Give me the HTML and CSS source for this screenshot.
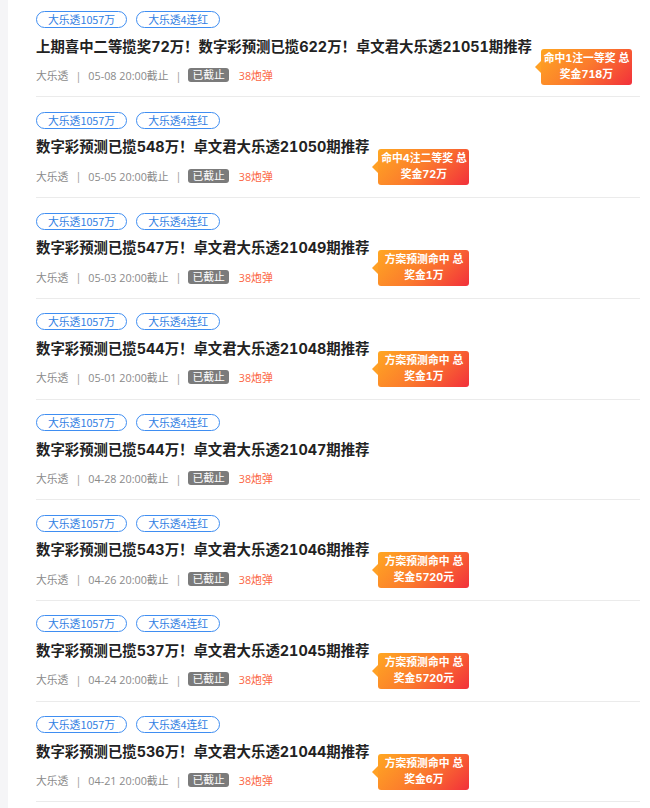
FILE: index.html
```html
<!DOCTYPE html>
<html lang="zh-CN">
<head>
    <meta charset="UTF-8">
    <title>大乐透推荐</title>
    <link rel="stylesheet" href="styles.css">
</head>
<body>
<div class="panel">
    <div class="item">
        <div class="tags"><span class="tag">大乐透1057万</span><span class="tag">大乐透4连红</span></div>
        <div class="title"><span class="title-text">上期喜中二等揽奖72万！数字彩预测已揽622万！卓文君大乐透21051期推荐<span class="prize">命中1注一等奖 总<br>奖金718万</span></span></div>
        <div class="meta"><span>大乐透</span><span class="sep">|</span><span>05-08 20:00截止</span><span class="sep">|</span><span class="closed">已截止</span><span class="bomb">38炮弹</span></div>
    </div>
    <div class="item">
        <div class="tags"><span class="tag">大乐透1057万</span><span class="tag">大乐透4连红</span></div>
        <div class="title"><span class="title-text">数字彩预测已揽548万！卓文君大乐透21050期推荐<span class="prize">命中4注二等奖 总<br>奖金72万</span></span></div>
        <div class="meta"><span>大乐透</span><span class="sep">|</span><span>05-05 20:00截止</span><span class="sep">|</span><span class="closed">已截止</span><span class="bomb">38炮弹</span></div>
    </div>
    <div class="item">
        <div class="tags"><span class="tag">大乐透1057万</span><span class="tag">大乐透4连红</span></div>
        <div class="title"><span class="title-text">数字彩预测已揽547万！卓文君大乐透21049期推荐<span class="prize">方案预测命中 总<br>奖金1万</span></span></div>
        <div class="meta"><span>大乐透</span><span class="sep">|</span><span>05-03 20:00截止</span><span class="sep">|</span><span class="closed">已截止</span><span class="bomb">38炮弹</span></div>
    </div>
    <div class="item">
        <div class="tags"><span class="tag">大乐透1057万</span><span class="tag">大乐透4连红</span></div>
        <div class="title"><span class="title-text">数字彩预测已揽544万！卓文君大乐透21048期推荐<span class="prize">方案预测命中 总<br>奖金1万</span></span></div>
        <div class="meta"><span>大乐透</span><span class="sep">|</span><span>05-01 20:00截止</span><span class="sep">|</span><span class="closed">已截止</span><span class="bomb">38炮弹</span></div>
    </div>
    <div class="item">
        <div class="tags"><span class="tag">大乐透1057万</span><span class="tag">大乐透4连红</span></div>
        <div class="title"><span class="title-text">数字彩预测已揽544万！卓文君大乐透21047期推荐</span></div>
        <div class="meta"><span>大乐透</span><span class="sep">|</span><span>04-28 20:00截止</span><span class="sep">|</span><span class="closed">已截止</span><span class="bomb">38炮弹</span></div>
    </div>
    <div class="item">
        <div class="tags"><span class="tag">大乐透1057万</span><span class="tag">大乐透4连红</span></div>
        <div class="title"><span class="title-text">数字彩预测已揽543万！卓文君大乐透21046期推荐<span class="prize">方案预测命中 总<br>奖金5720元</span></span></div>
        <div class="meta"><span>大乐透</span><span class="sep">|</span><span>04-26 20:00截止</span><span class="sep">|</span><span class="closed">已截止</span><span class="bomb">38炮弹</span></div>
    </div>
    <div class="item">
        <div class="tags"><span class="tag">大乐透1057万</span><span class="tag">大乐透4连红</span></div>
        <div class="title"><span class="title-text">数字彩预测已揽537万！卓文君大乐透21045期推荐<span class="prize">方案预测命中 总<br>奖金5720元</span></span></div>
        <div class="meta"><span>大乐透</span><span class="sep">|</span><span>04-24 20:00截止</span><span class="sep">|</span><span class="closed">已截止</span><span class="bomb">38炮弹</span></div>
    </div>
    <div class="item">
        <div class="tags"><span class="tag">大乐透1057万</span><span class="tag">大乐透4连红</span></div>
        <div class="title"><span class="title-text">数字彩预测已揽536万！卓文君大乐透21044期推荐<span class="prize">方案预测命中 总<br>奖金6万</span></span></div>
        <div class="meta"><span>大乐透</span><span class="sep">|</span><span>04-21 20:00截止</span><span class="sep">|</span><span class="closed">已截止</span><span class="bomb">38炮弹</span></div>
    </div>
</div>
</body>
</html>
```

FILE: styles.css
```css
body {
    margin: 0;
    background: #f5f5f7;
    font-family: Inter, "Noto Sans CJK SC", sans-serif;
    font-variant-numeric: tabular-nums;
}

.panel {
    margin-left: 8px;
    min-height: 808px;
    background: #fff;
    padding: 0 10px 0 28px;
}

.item {
    padding: 14.5px 0 13.2px;
    border-bottom: 1px solid #ebebeb;
}
.item:first-child {
    padding-top: 11.3px;
}

.tags {
    display: flex;
    gap: 9px;
    font-family: "Noto Sans CJK SC", sans-serif;
}
.tag {
    height: 15px;
    line-height: 15px;
    padding: 0 11px;
    border: 1px solid #3f8ef2;
    border-radius: 9px;
    color: #2f7ee3;
    font-size: 10.8px;
}

.title {
    margin-top: 7.5px;
    height: 22px;
    line-height: 22px;
    font-size: 14.4px;
    font-weight: bold;
    color: #222;
}
.title-text {
    position: relative;
    display: inline-block;
}

.prize {
    position: absolute;
    left: calc(100% + 9px);
    top: 13px;
    width: 91px;
    height: 36px;
    padding-top: 2px;
    box-sizing: border-box;
    border-radius: 3px;
    background: linear-gradient(135deg, #ffa722 0%, #fb7a2d 50%, #f2303b 100%);
    color: #fff;
    font-size: 10.8px;
    line-height: 16px;
    text-align: center;
    white-space: nowrap;
    z-index: 1;
}
.prize::before {
    content: "";
    position: absolute;
    left: -6px;
    top: 12px;
    border-style: solid;
    border-width: 6px 6px 6px 0;
    border-color: transparent #ffa025 transparent transparent;
}

.meta {
    margin-top: 9.5px;
    height: 16px;
    display: flex;
    align-items: center;
    font-family: "Open Sans", "Noto Sans CJK SC", sans-serif;
    font-size: 10.8px;
    color: #8a8a8a;
}
.sep {
    margin: 0 7px;
    color: #999;
}
.closed {
    height: 14px;
    line-height: 14px;
    padding: 0 4px;
    border-radius: 3px;
    background: #7b7b7b;
    color: #fff;
}
.bomb {
    margin-left: 10px;
    color: #fb6543;
}
```
